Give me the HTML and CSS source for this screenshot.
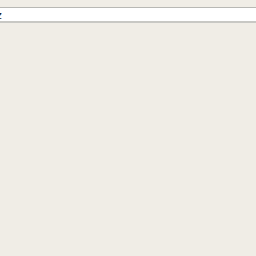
FILE: index.html
```html
<!DOCTYPE html>
<html>
<head>
<meta charset="utf-8">
<link rel="stylesheet" href="styles.css">
</head>
<body>
<div class="bar"><span class="txt">z</span></div>
</body>
</html>
```
FILE: styles.css
```css
html, body { margin: 0; padding: 0; }
body {
  background: #f0ede6;
  width: 256px;
  height: 256px;
  overflow: hidden;
  font-family: "DejaVu Sans", sans-serif;
  padding-top: 7px;
  box-sizing: border-box;
}
.bar {
  height: 13px;
  background: #ffffff;
  border-top: 1px solid #b8b8b4;
  border-bottom: 2px solid #c8c8c4;
  overflow: hidden;
  display: flex;
  align-items: center;
}
.txt {
  font-size: 11px;
  color: #222;
  margin-left: -4px;
  line-height: 1;
  padding-top: 1px;
}
```
